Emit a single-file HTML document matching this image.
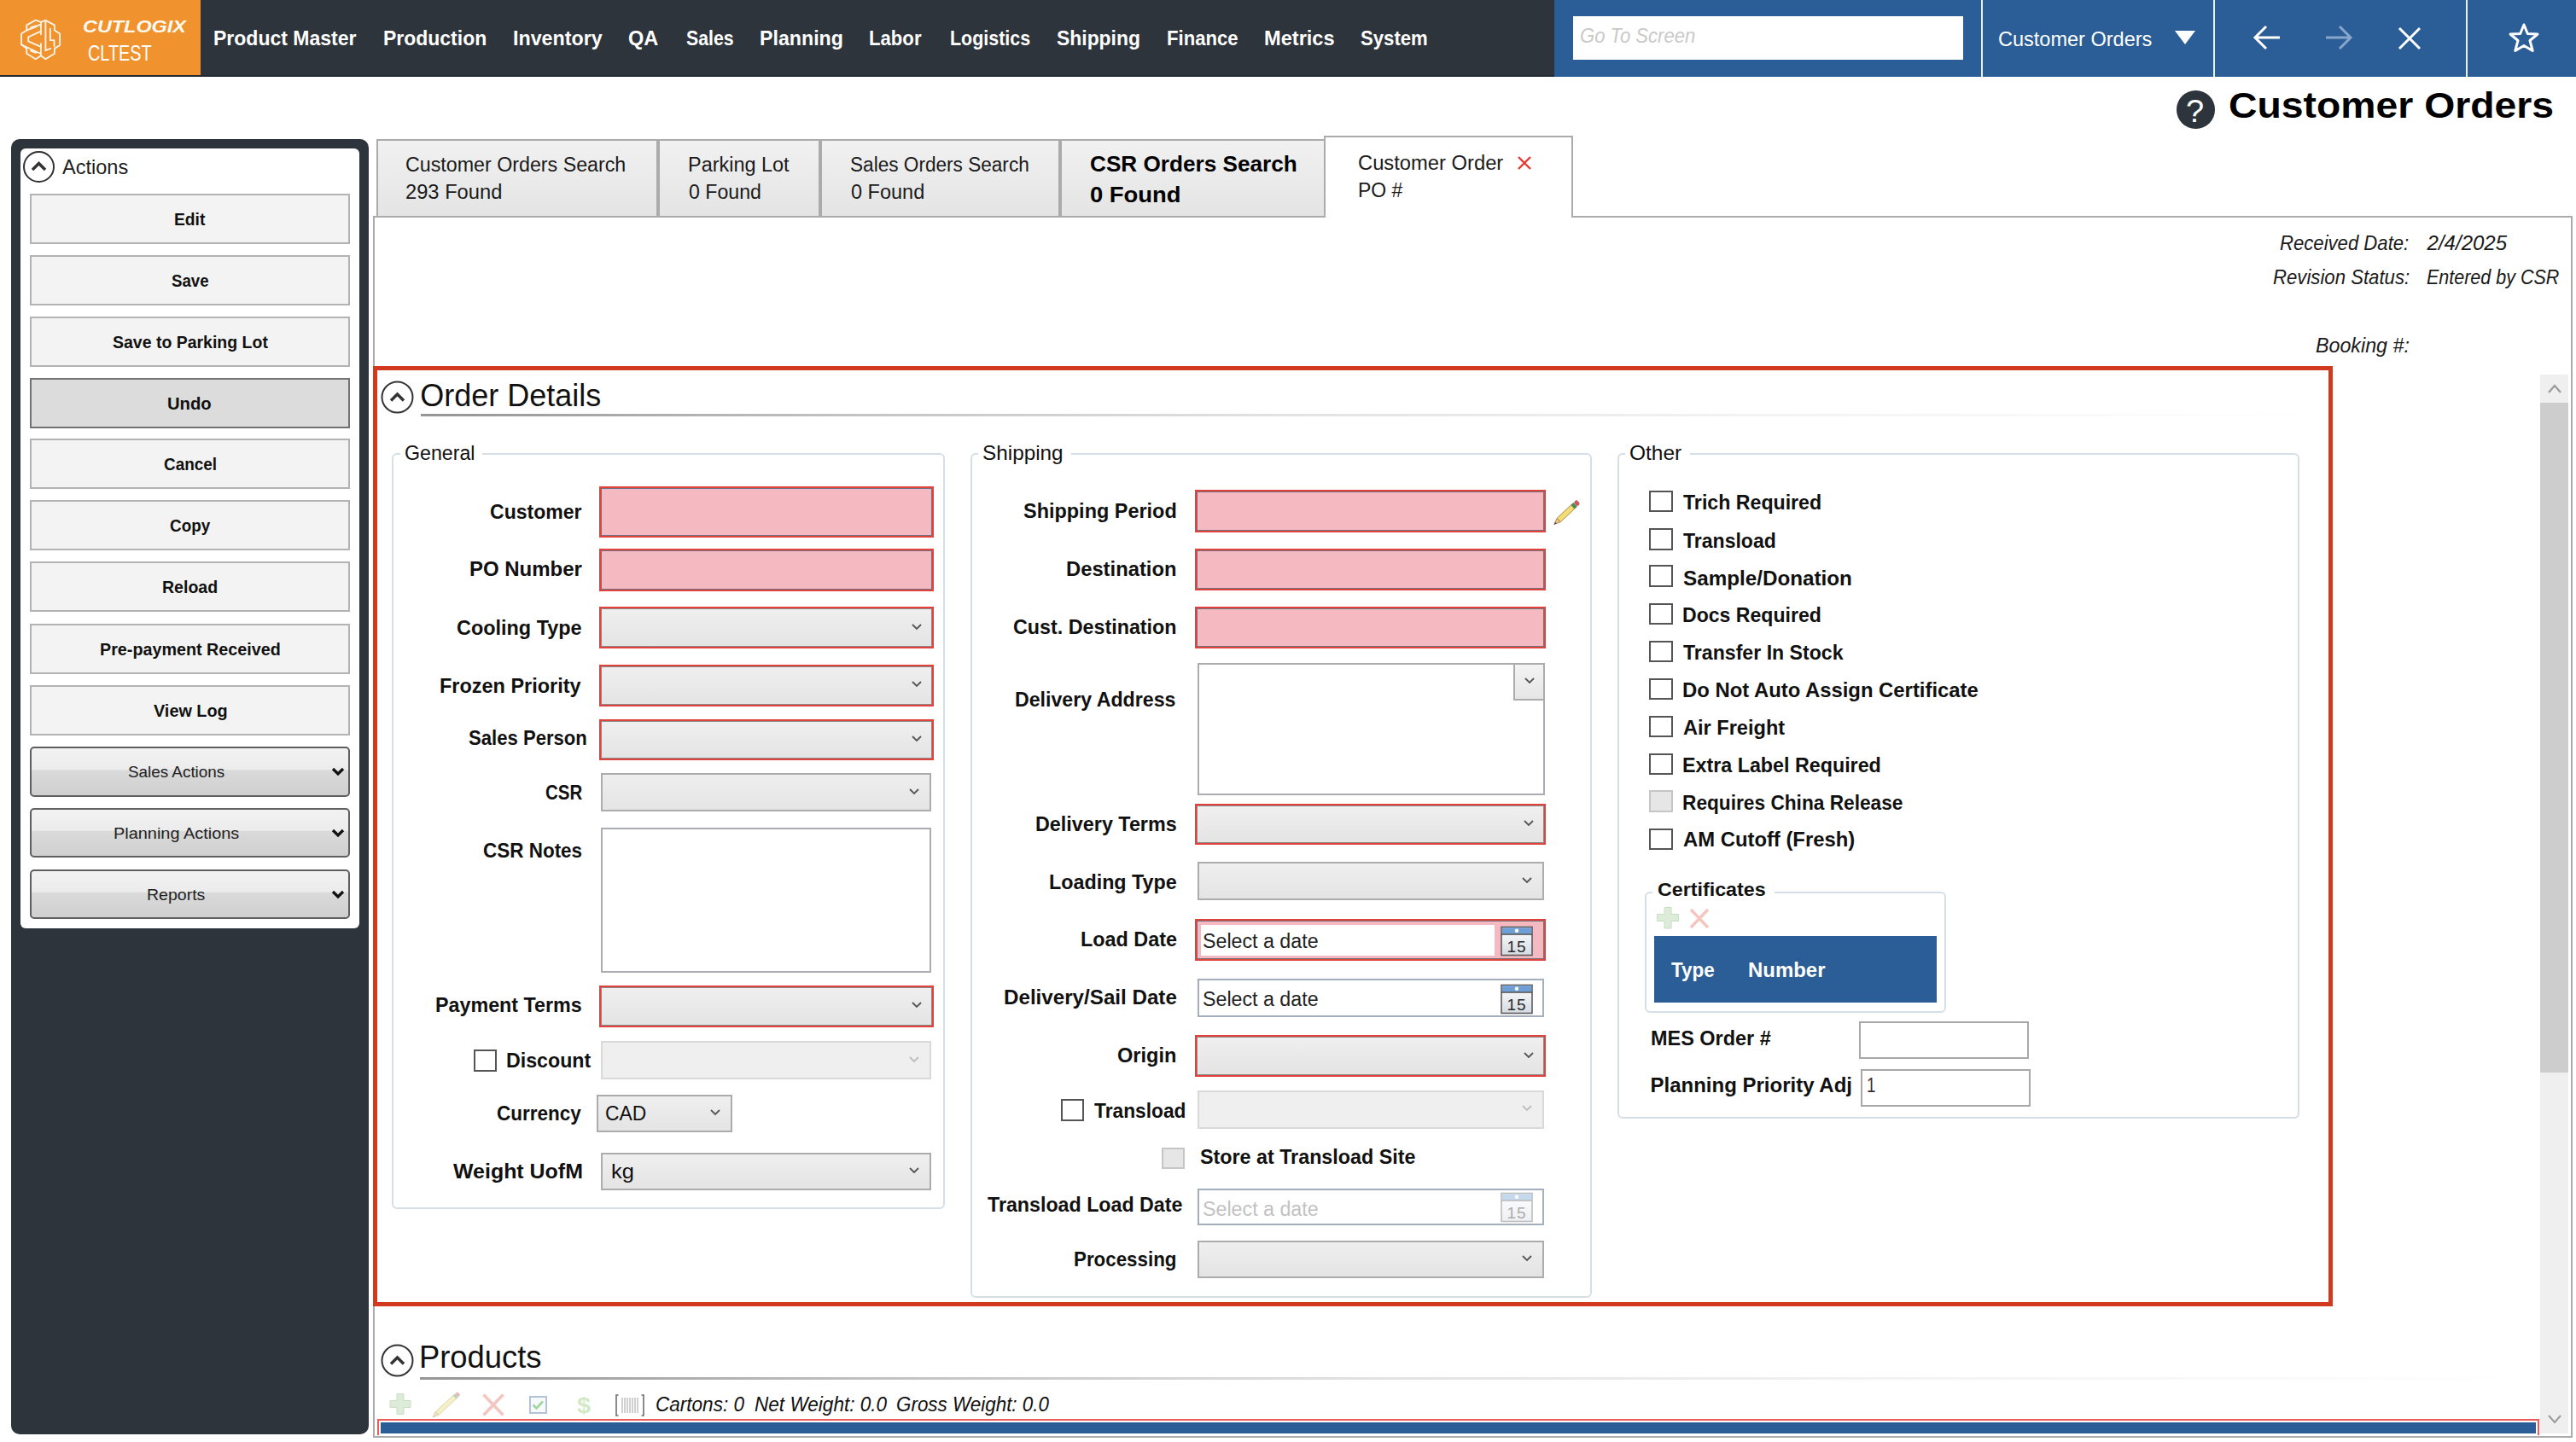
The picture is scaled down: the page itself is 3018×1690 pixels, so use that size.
<!DOCTYPE html>
<html><head><meta charset="utf-8"><style>
html,body{margin:0;padding:0;}
body{width:3018px;height:1690px;overflow:hidden;background:#fff;position:relative;font-family:"Liberation Sans", sans-serif;}
body div, body svg{position:absolute;box-sizing:border-box;}
</style></head><body>
<div style="left:0.0px;top:0.0px;width:3018.0px;height:90.0px;background:#2e343b;"></div>
<div style="left:0.0px;top:88.0px;width:1821.0px;height:2.0px;background:#232a32;"></div>
<div style="left:0.0px;top:0.0px;width:235.0px;height:88.0px;background:#f0932f;"></div>
<svg style="left:20px;top:20px" width="56" height="56" viewBox="0 0 1442 1442" fill="none" stroke="#fdf3e6" stroke-width="48" stroke-linejoin="round" stroke-linecap="round">
<path d="M720 150 L560 95 L290 240 L290 400 L130 500 L130 830 L290 950 L290 1100 L560 1270 L720 1165"/>
<path d="M720 150 L860 100 L1130 240 L1130 400 L1290 500 L1290 850 L1130 950 L1130 1100 L860 1270 L720 1165"/>
<path d="M720 150 L720 520 M720 800 L720 1165"/>
<path d="M290 400 L700 230 M720 430 L340 600 L340 730 L720 900 M130 830 L700 1100"/>
<path d="M860 130 L860 1010 L1010 950 M1000 350 L1000 700 L1120 700 L1120 880"/>
<path d="M430 330 L560 280 M430 1010 L560 1060" stroke-width="80"/>
</svg>
<div style="left:96.89px;top:19.72px;font-size:21px;line-height:21px;color:#fffaf2;white-space:nowrap;font-weight:700;font-style:italic;transform:scaleX(1.1143);transform-origin:0 0;">CUTLOGIX</div>
<div style="left:103.24px;top:48.99px;font-size:26px;line-height:26px;color:#fff;white-space:nowrap;transform:scaleX(0.7639);transform-origin:0 0;">CLTEST</div>
<div style="left:250.06px;top:33.47px;font-size:24.6px;line-height:24.6px;color:#fff;white-space:nowrap;font-weight:700;transform:scaleX(0.9358);transform-origin:0 0;">Product Master</div>
<div style="left:448.77px;top:33.47px;font-size:24.6px;line-height:24.6px;color:#fff;white-space:nowrap;font-weight:700;transform:scaleX(0.9337);transform-origin:0 0;">Production</div>
<div style="left:601.05px;top:33.47px;font-size:24.6px;line-height:24.6px;color:#fff;white-space:nowrap;font-weight:700;transform:scaleX(0.9453);transform-origin:0 0;">Inventory</div>
<div style="left:736.44px;top:33.47px;font-size:24.6px;line-height:24.6px;color:#fff;white-space:nowrap;font-weight:700;transform:scaleX(0.9577);transform-origin:0 0;">QA</div>
<div style="left:804.00px;top:33.47px;font-size:24.6px;line-height:24.6px;color:#fff;white-space:nowrap;font-weight:700;transform:scaleX(0.8649);transform-origin:0 0;">Sales</div>
<div style="left:890.06px;top:33.47px;font-size:24.6px;line-height:24.6px;color:#fff;white-space:nowrap;font-weight:700;transform:scaleX(0.9429);transform-origin:0 0;">Planning</div>
<div style="left:1018.10px;top:33.47px;font-size:24.6px;line-height:24.6px;color:#fff;white-space:nowrap;font-weight:700;transform:scaleX(0.9004);transform-origin:0 0;">Labor</div>
<div style="left:1112.83px;top:33.47px;font-size:24.6px;line-height:24.6px;color:#fff;white-space:nowrap;font-weight:700;transform:scaleX(0.8722);transform-origin:0 0;">Logistics</div>
<div style="left:1238.00px;top:33.47px;font-size:24.6px;line-height:24.6px;color:#fff;white-space:nowrap;font-weight:700;transform:scaleX(0.9313);transform-origin:0 0;">Shipping</div>
<div style="left:1367.10px;top:33.47px;font-size:24.6px;line-height:24.6px;color:#fff;white-space:nowrap;font-weight:700;transform:scaleX(0.8986);transform-origin:0 0;">Finance</div>
<div style="left:1481.04px;top:33.47px;font-size:24.6px;line-height:24.6px;color:#fff;white-space:nowrap;font-weight:700;transform:scaleX(0.9593);transform-origin:0 0;">Metrics</div>
<div style="left:1594.00px;top:33.47px;font-size:24.6px;line-height:24.6px;color:#fff;white-space:nowrap;font-weight:700;transform:scaleX(0.9004);transform-origin:0 0;">System</div>
<div style="left:1821.0px;top:0.0px;width:1197.0px;height:90.0px;background:#2b5e96;"></div>
<div style="left:1843.0px;top:19.0px;width:457.0px;height:51.0px;background:#fff;"></div>
<div style="left:1851.08px;top:29.68px;font-size:24px;line-height:24px;color:#c9c9c9;white-space:nowrap;font-style:italic;transform:scaleX(0.9187);transform-origin:0 0;">Go To Screen</div>
<div style="left:2321.0px;top:0.0px;width:2.0px;height:90.0px;background:#e8eef5;"></div>
<div style="left:2593.0px;top:0.0px;width:2.0px;height:90.0px;background:#e8eef5;"></div>
<div style="left:2889.0px;top:0.0px;width:2.0px;height:90.0px;background:#e8eef5;"></div>
<div style="left:2340.72px;top:33.68px;font-size:24px;line-height:24px;color:#fff;white-space:nowrap;transform:scaleX(0.9796);transform-origin:0 0;">Customer Orders</div>
<svg style="left:2546px;top:34px" width="28" height="20" viewBox="0 0 28 20"><path d="M2 2 L26 2 L14 18 Z" fill="#fff"/></svg>
<svg style="left:2638px;top:27px" width="36" height="34" viewBox="0 0 36 34" fill="none" stroke="#fff" stroke-width="3"><path d="M33 17 L5 17 M17 4 L4 17 L17 30"/></svg>
<svg style="left:2722px;top:27px" width="36" height="34" viewBox="0 0 36 34" fill="none" stroke="#86a6cb" stroke-width="3"><path d="M3 17 L31 17 M19 4 L32 17 L19 30"/></svg>
<svg style="left:2807px;top:29px" width="32" height="32" viewBox="0 0 32 32" fill="none" stroke="#fff" stroke-width="3"><path d="M4 4 L28 28 M28 4 L4 28"/></svg>
<svg style="left:2937px;top:24px" width="40" height="40" viewBox="0 0 40 40" fill="none" stroke="#fff" stroke-width="3" stroke-linejoin="round"><path d="M20 5 L24.3 15.5 L36 16 L27 23.5 L30.2 35.5 L20 29.5 L9.8 35.5 L13 23.5 L4 16 L15.7 15.5 Z"/></svg>
<div style="left:2550.0px;top:106.0px;width:44.5px;height:44.5px;background:#2e343b;border-radius:50%;"></div>
<div style="left:2560.94px;top:112.52px;font-size:36px;line-height:36px;color:#fff;white-space:nowrap;transform:scaleX(1.0556);transform-origin:0 0;">?</div>
<div style="left:2610.52px;top:102.29px;font-size:43px;line-height:43px;color:#000;white-space:nowrap;font-weight:700;transform:scaleX(1.0775);transform-origin:0 0;">Customer Orders</div>
<div style="left:12.5px;top:162.5px;width:419.5px;height:1518.5px;background:#2e343b;border-radius:10px;"></div>
<div style="left:24.0px;top:174.0px;width:396.5px;height:913.5px;background:#fff;border-radius:6px;"></div>
<svg style="left:26px;top:176px" width="40" height="40" viewBox="0 0 40 40" fill="none"><circle cx="19.5" cy="19.5" r="17.5" stroke="#333" stroke-width="2"/><path d="M12 23 L19.5 15.5 L27 23" stroke="#333" stroke-width="3.5"/></svg>
<div style="left:72.80px;top:184.18px;font-size:24px;line-height:24px;color:#1e1e1e;white-space:nowrap;transform:scaleX(0.9809);transform-origin:0 0;">Actions</div>
<div style="left:35.0px;top:227.0px;width:375.0px;height:59.0px;background:#f3f3f3;border:2px solid #b3b3b3;"></div>
<div style="left:35.0px;top:299.0px;width:375.0px;height:59.0px;background:#f3f3f3;border:2px solid #b3b3b3;"></div>
<div style="left:35.0px;top:371.0px;width:375.0px;height:59.0px;background:#f3f3f3;border:2px solid #b3b3b3;"></div>
<div style="left:35.0px;top:442.5px;width:375.0px;height:59.0px;background:#dcdcdc;border:2px solid #737373;"></div>
<div style="left:35.0px;top:514.0px;width:375.0px;height:59.0px;background:#f3f3f3;border:2px solid #b3b3b3;"></div>
<div style="left:35.0px;top:586.0px;width:375.0px;height:59.0px;background:#f3f3f3;border:2px solid #b3b3b3;"></div>
<div style="left:35.0px;top:658.0px;width:375.0px;height:59.0px;background:#f3f3f3;border:2px solid #b3b3b3;"></div>
<div style="left:35.0px;top:730.5px;width:375.0px;height:59.0px;background:#f3f3f3;border:2px solid #b3b3b3;"></div>
<div style="left:35.0px;top:803.0px;width:375.0px;height:59.0px;background:#f3f3f3;border:2px solid #b3b3b3;"></div>
<div style="left:204.04px;top:247.47px;font-size:20px;line-height:20px;color:#111;white-space:nowrap;font-weight:700;transform:scaleX(0.9619);transform-origin:0 0;">Edit</div>
<div style="left:201.00px;top:319.47px;font-size:20px;line-height:20px;color:#111;white-space:nowrap;font-weight:700;transform:scaleX(0.9338);transform-origin:0 0;">Save</div>
<div style="left:131.50px;top:391.47px;font-size:20px;line-height:20px;color:#111;white-space:nowrap;font-weight:700;transform:scaleX(0.9741);transform-origin:0 0;">Save to Parking Lot</div>
<div style="left:196.49px;top:462.97px;font-size:20px;line-height:20px;color:#111;white-space:nowrap;font-weight:700;transform:scaleX(1.0125);transform-origin:0 0;">Undo</div>
<div style="left:191.50px;top:534.47px;font-size:20px;line-height:20px;color:#111;white-space:nowrap;font-weight:700;transform:scaleX(0.9457);transform-origin:0 0;">Cancel</div>
<div style="left:198.50px;top:606.47px;font-size:20px;line-height:20px;color:#111;white-space:nowrap;font-weight:700;transform:scaleX(0.9435);transform-origin:0 0;">Copy</div>
<div style="left:190.02px;top:678.47px;font-size:20px;line-height:20px;color:#111;white-space:nowrap;font-weight:700;transform:scaleX(0.9773);transform-origin:0 0;">Reload</div>
<div style="left:116.51px;top:750.97px;font-size:20px;line-height:20px;color:#111;white-space:nowrap;font-weight:700;transform:scaleX(0.9867);transform-origin:0 0;">Pre-payment Received</div>
<div style="left:179.50px;top:823.47px;font-size:20px;line-height:20px;color:#111;white-space:nowrap;font-weight:700;transform:scaleX(0.9918);transform-origin:0 0;">View Log</div>
<div style="left:35.0px;top:875.0px;width:375.0px;height:58.5px;background:linear-gradient(#f2f2f2 0%,#ececec 45%,#dadada 47%,#cfcfcf 100%);border:2px solid #5f5f5f;border-radius:5px;"></div>
<svg style="left:388px;top:899.0px" width="16" height="11" viewBox="0 0 16 11"><path d="M2 2 L8 8 L14 2" fill="none" stroke="#111" stroke-width="3.2"/></svg>
<div style="left:35.0px;top:946.6px;width:375.0px;height:58.5px;background:linear-gradient(#f2f2f2 0%,#ececec 45%,#dadada 47%,#cfcfcf 100%);border:2px solid #5f5f5f;border-radius:5px;"></div>
<svg style="left:388px;top:970.6px" width="16" height="11" viewBox="0 0 16 11"><path d="M2 2 L8 8 L14 2" fill="none" stroke="#111" stroke-width="3.2"/></svg>
<div style="left:35.0px;top:1018.5px;width:375.0px;height:58.5px;background:linear-gradient(#f2f2f2 0%,#ececec 45%,#dadada 47%,#cfcfcf 100%);border:2px solid #5f5f5f;border-radius:5px;"></div>
<svg style="left:388px;top:1042.5px" width="16" height="11" viewBox="0 0 16 11"><path d="M2 2 L8 8 L14 2" fill="none" stroke="#111" stroke-width="3.2"/></svg>
<div style="left:150.00px;top:896.14px;font-size:18.5px;line-height:18.5px;color:#222;white-space:nowrap;transform:scaleX(1.0194);transform-origin:0 0;">Sales Actions</div>
<div style="left:132.92px;top:967.74px;font-size:18.5px;line-height:18.5px;color:#222;white-space:nowrap;transform:scaleX(1.0764);transform-origin:0 0;">Planning Actions</div>
<div style="left:172.45px;top:1039.64px;font-size:18.5px;line-height:18.5px;color:#222;white-space:nowrap;transform:scaleX(1.0547);transform-origin:0 0;">Reports</div>
<div style="left:437.0px;top:253.0px;width:2577.0px;height:1432.0px;border:2px solid #ababab;"></div>
<div style="left:441.0px;top:163.0px;width:329.5px;height:91.5px;background:linear-gradient(#f1f1f1,#e4e4e4);border:2px solid #ababab;"></div>
<div style="left:770.5px;top:163.0px;width:190.0px;height:91.5px;background:linear-gradient(#f1f1f1,#e4e4e4);border:2px solid #ababab;"></div>
<div style="left:960.5px;top:163.0px;width:281.5px;height:91.5px;background:linear-gradient(#f1f1f1,#e4e4e4);border:2px solid #ababab;"></div>
<div style="left:1242.0px;top:163.0px;width:310.5px;height:91.5px;background:linear-gradient(#f1f1f1,#e4e4e4);border:2px solid #ababab;"></div>
<div style="left:1551.0px;top:159.0px;width:292.0px;height:96.0px;background:#fff;border:2px solid #ababab;border-bottom:none;"></div>
<div style="left:475.49px;top:182.23px;font-size:23px;line-height:23px;color:#1a1a1a;white-space:nowrap;transform:scaleX(1.0104);transform-origin:0 0;">Customer Orders Search</div>
<div style="left:475.47px;top:214.23px;font-size:23px;line-height:23px;color:#1a1a1a;white-space:nowrap;transform:scaleX(1.0306);transform-origin:0 0;">293 Found</div>
<div style="left:805.78px;top:182.23px;font-size:23px;line-height:23px;color:#1a1a1a;white-space:nowrap;transform:scaleX(1.0193);transform-origin:0 0;">Parking Lot</div>
<div style="left:806.80px;top:214.23px;font-size:23px;line-height:23px;color:#1a1a1a;white-space:nowrap;transform:scaleX(1.0071);transform-origin:0 0;">0 Found</div>
<div style="left:996.02px;top:182.23px;font-size:23px;line-height:23px;color:#1a1a1a;white-space:nowrap;transform:scaleX(0.9826);transform-origin:0 0;">Sales Orders Search</div>
<div style="left:997.00px;top:214.23px;font-size:23px;line-height:23px;color:#1a1a1a;white-space:nowrap;transform:scaleX(1.0215);transform-origin:0 0;">0 Found</div>
<div style="left:1276.69px;top:178.59px;font-size:26px;line-height:26px;color:#000;white-space:nowrap;font-weight:700;transform:scaleX(1.0057);transform-origin:0 0;">CSR Orders Search</div>
<div style="left:1276.65px;top:215.49px;font-size:26px;line-height:26px;color:#000;white-space:nowrap;font-weight:700;transform:scaleX(1.0543);transform-origin:0 0;">0 Found</div>
<div style="left:1590.97px;top:180.33px;font-size:23px;line-height:23px;color:#1a1a1a;white-space:nowrap;transform:scaleX(1.0328);transform-origin:0 0;">Customer Order</div>
<div style="left:1591.00px;top:212.13px;font-size:23px;line-height:23px;color:#1a1a1a;white-space:nowrap;">PO #</div>
<svg style="left:1776px;top:181px" width="20" height="20" viewBox="0 0 20 20"><path d="M3 3 L17 17 M17 3 L3 17" stroke="#e8372f" stroke-width="2.4"/></svg>
<div style="left:2671.40px;top:273.18px;font-size:24px;line-height:24px;color:#1a1a1a;white-space:nowrap;font-style:italic;transform:scaleX(0.9216);transform-origin:0 0;">Received Date:</div>
<div style="left:2843.60px;top:273.18px;font-size:24px;line-height:24px;color:#1a1a1a;white-space:nowrap;font-style:italic;">2/4/2025</div>
<div style="left:2662.50px;top:313.48px;font-size:24px;line-height:24px;color:#1a1a1a;white-space:nowrap;font-style:italic;transform:scaleX(0.9233);transform-origin:0 0;">Revision Status:</div>
<div style="left:2843.00px;top:313.48px;font-size:24px;line-height:24px;color:#1a1a1a;white-space:nowrap;font-style:italic;transform:scaleX(0.8955);transform-origin:0 0;">Entered by CSR</div>
<div style="left:2712.80px;top:393.28px;font-size:24px;line-height:24px;color:#1a1a1a;white-space:nowrap;font-style:italic;transform:scaleX(0.9685);transform-origin:0 0;">Booking #:</div>
<div style="left:2976.0px;top:438.5px;width:33.0px;height:1241.5px;background:#efefef;"></div>
<div style="left:2976.0px;top:472.0px;width:33.0px;height:785.0px;background:#cdcdcd;"></div>
<svg style="left:2983px;top:448px" width="20" height="14" viewBox="0 0 20 14"><path d="M3 12 L10 4 L17 12" fill="none" stroke="#9a9a9a" stroke-width="2.2"/></svg>
<svg style="left:2983px;top:1656px" width="20" height="14" viewBox="0 0 20 14"><path d="M3 3 L10 11 L17 3" fill="none" stroke="#9a9a9a" stroke-width="2"/></svg>
<div style="left:437.0px;top:429.0px;width:2296.0px;height:1102.0px;border:5px solid #d13a1f;"></div>
<svg style="left:445.5px;top:445.5px" width="40" height="40" viewBox="0 0 40 40" fill="none"><circle cx="19.5" cy="19.5" r="18" stroke="#333" stroke-width="2"/><path d="M12 23.5 L19.5 16 L27 23.5" stroke="#333" stroke-width="3.5"/></svg>
<div style="left:492.20px;top:445.52px;font-size:36px;line-height:36px;color:#111;white-space:nowrap;">Order Details</div>
<div style="left:492.5px;top:485.0px;width:2235.5px;height:3.0px;background:linear-gradient(90deg,#959595 0%,#c2c2c2 22%,#e2e2e2 45%,#f3f3f3 70%,rgba(255,255,255,0) 100%);"></div>
<div style="left:459.0px;top:531.0px;width:648.0px;height:886.0px;border:2px solid #d6dfe5;border-radius:6px;"></div>
<div style="left:468.8px;top:529.0px;width:96.2px;height:5.0px;background:#fff;"></div>
<div style="left:473.85px;top:519.26px;font-size:24.5px;line-height:24.5px;color:#111;white-space:nowrap;transform:scaleX(0.9467);transform-origin:0 0;">General</div>
<div style="left:574.30px;top:587.98px;font-size:24px;line-height:24px;color:#111;white-space:nowrap;font-weight:700;transform:scaleX(0.9599);transform-origin:0 0;">Customer</div>
<div style="left:549.90px;top:654.68px;font-size:24px;line-height:24px;color:#111;white-space:nowrap;font-weight:700;">PO Number</div>
<div style="left:535.30px;top:723.68px;font-size:24px;line-height:24px;color:#111;white-space:nowrap;font-weight:700;transform:scaleX(0.9756);transform-origin:0 0;">Cooling Type</div>
<div style="left:515.32px;top:791.68px;font-size:24px;line-height:24px;color:#111;white-space:nowrap;font-weight:700;transform:scaleX(0.9774);transform-origin:0 0;">Frozen Priority</div>
<div style="left:548.80px;top:853.38px;font-size:24px;line-height:24px;color:#111;white-space:nowrap;font-weight:700;transform:scaleX(0.9208);transform-origin:0 0;">Sales Person</div>
<div style="left:638.60px;top:917.08px;font-size:24px;line-height:24px;color:#111;white-space:nowrap;font-weight:700;transform:scaleX(0.8522);transform-origin:0 0;">CSR</div>
<div style="left:565.70px;top:984.68px;font-size:24px;line-height:24px;color:#111;white-space:nowrap;font-weight:700;transform:scaleX(0.9363);transform-origin:0 0;">CSR Notes</div>
<div style="left:510.13px;top:1166.18px;font-size:24px;line-height:24px;color:#111;white-space:nowrap;font-weight:700;transform:scaleX(0.9703);transform-origin:0 0;">Payment Terms</div>
<div style="left:592.63px;top:1230.68px;font-size:24px;line-height:24px;color:#111;white-space:nowrap;font-weight:700;transform:scaleX(0.9668);transform-origin:0 0;">Discount</div>
<div style="left:582.10px;top:1292.68px;font-size:24px;line-height:24px;color:#111;white-space:nowrap;font-weight:700;transform:scaleX(0.9375);transform-origin:0 0;">Currency</div>
<div style="left:530.60px;top:1360.68px;font-size:24px;line-height:24px;color:#111;white-space:nowrap;font-weight:700;transform:scaleX(1.0393);transform-origin:0 0;">Weight UofM</div>
<div style="left:702.3px;top:570.3px;width:391.4px;height:59.3px;background:#f4b9c1;border:2.5px solid #e2413c;box-shadow:inset 0 0 0 1px #6d7680;"></div>
<div style="left:702.3px;top:643.2px;width:391.4px;height:49.4px;background:#f4b9c1;border:2.5px solid #e2413c;box-shadow:inset 0 0 0 1px #6d7680;"></div>
<div style="left:702.3px;top:710.8px;width:391.4px;height:49.4px;background:linear-gradient(#efefef,#e4e4e4);border:2.5px solid #e2413c;box-shadow:inset 0 0 0 1px #8a8a8a;"></div>
<svg style="left:1066.7px;top:729.5px" width="14" height="10" viewBox="0 0 14 10"><path d="M2 2 L7 7 L12 2" fill="none" stroke="#555" stroke-width="1.8"/></svg>
<div style="left:702.3px;top:778.7px;width:391.4px;height:49.4px;background:linear-gradient(#efefef,#e4e4e4);border:2.5px solid #e2413c;box-shadow:inset 0 0 0 1px #8a8a8a;"></div>
<svg style="left:1066.7px;top:797.4px" width="14" height="10" viewBox="0 0 14 10"><path d="M2 2 L7 7 L12 2" fill="none" stroke="#555" stroke-width="1.8"/></svg>
<div style="left:702.3px;top:842.7px;width:391.4px;height:48.6px;background:linear-gradient(#efefef,#e4e4e4);border:2.5px solid #e2413c;box-shadow:inset 0 0 0 1px #8a8a8a;"></div>
<svg style="left:1066.7px;top:861.0px" width="14" height="10" viewBox="0 0 14 10"><path d="M2 2 L7 7 L12 2" fill="none" stroke="#555" stroke-width="1.8"/></svg>
<div style="left:704.4px;top:906.2px;width:386.6px;height:45.0px;background:linear-gradient(#efefef,#e4e4e4);border:2px solid #acacac;"></div>
<svg style="left:1064.0px;top:922.7px" width="14" height="10" viewBox="0 0 14 10"><path d="M2 2 L7 7 L12 2" fill="none" stroke="#555" stroke-width="1.8"/></svg>
<div style="left:704.4px;top:970.0px;width:386.6px;height:169.5px;background:#fff;border:2px solid #abadb3;"></div>
<div style="left:702.3px;top:1154.7px;width:391.4px;height:49.4px;background:linear-gradient(#efefef,#e4e4e4);border:2.5px solid #e2413c;box-shadow:inset 0 0 0 1px #8a8a8a;"></div>
<svg style="left:1066.7px;top:1173.4px" width="14" height="10" viewBox="0 0 14 10"><path d="M2 2 L7 7 L12 2" fill="none" stroke="#555" stroke-width="1.8"/></svg>
<div style="left:704.4px;top:1220.3px;width:386.6px;height:44.7px;background:#efefef;border:2px solid #d9d9d9;"></div>
<svg style="left:1064.0px;top:1236.7px" width="14" height="10" viewBox="0 0 14 10"><path d="M2 2 L7 7 L12 2" fill="none" stroke="#bdbdbd" stroke-width="1.8"/></svg>
<div style="left:554.6px;top:1230.0px;width:27.4px;height:26.0px;background:#fff;border:2px solid #555;"></div>
<div style="left:699.0px;top:1282.5px;width:159.0px;height:44.2px;background:linear-gradient(#efefef,#e4e4e4);border:2px solid #acacac;"></div>
<svg style="left:831.0px;top:1298.6px" width="14" height="10" viewBox="0 0 14 10"><path d="M2 2 L7 7 L12 2" fill="none" stroke="#555" stroke-width="1.8"/></svg>
<div style="left:709.05px;top:1293.38px;font-size:24px;line-height:24px;color:#111;white-space:nowrap;transform:scaleX(0.9526);transform-origin:0 0;">CAD</div>
<div style="left:704.4px;top:1350.6px;width:386.6px;height:44.2px;background:linear-gradient(#efefef,#e4e4e4);border:2px solid #acacac;"></div>
<svg style="left:1064.0px;top:1366.7px" width="14" height="10" viewBox="0 0 14 10"><path d="M2 2 L7 7 L12 2" fill="none" stroke="#555" stroke-width="1.8"/></svg>
<div style="left:715.54px;top:1360.68px;font-size:24px;line-height:24px;color:#111;white-space:nowrap;transform:scaleX(1.0609);transform-origin:0 0;">kg</div>
<div style="left:1137.0px;top:531.0px;width:728.0px;height:990.0px;border:2px solid #d6dfe5;border-radius:6px;"></div>
<div style="left:1146.0px;top:529.0px;width:109.0px;height:5.0px;background:#fff;"></div>
<div style="left:1151.01px;top:518.76px;font-size:24.5px;line-height:24.5px;color:#111;white-space:nowrap;transform:scaleX(0.9922);transform-origin:0 0;">Shipping</div>
<div style="left:1199.10px;top:587.08px;font-size:24px;line-height:24px;color:#111;white-space:nowrap;font-weight:700;transform:scaleX(0.9769);transform-origin:0 0;">Shipping Period</div>
<div style="left:1249.41px;top:655.48px;font-size:24px;line-height:24px;color:#111;white-space:nowrap;font-weight:700;transform:scaleX(0.9906);transform-origin:0 0;">Destination</div>
<div style="left:1187.30px;top:723.38px;font-size:24px;line-height:24px;color:#111;white-space:nowrap;font-weight:700;transform:scaleX(0.9706);transform-origin:0 0;">Cust. Destination</div>
<div style="left:1189.23px;top:807.58px;font-size:24px;line-height:24px;color:#111;white-space:nowrap;font-weight:700;transform:scaleX(0.9653);transform-origin:0 0;">Delivery Address</div>
<div style="left:1212.83px;top:953.68px;font-size:24px;line-height:24px;color:#111;white-space:nowrap;font-weight:700;transform:scaleX(0.9729);transform-origin:0 0;">Delivery Terms</div>
<div style="left:1228.83px;top:1022.48px;font-size:24px;line-height:24px;color:#111;white-space:nowrap;font-weight:700;transform:scaleX(0.9708);transform-origin:0 0;">Loading Type</div>
<div style="left:1265.63px;top:1089.48px;font-size:24px;line-height:24px;color:#111;white-space:nowrap;font-weight:700;transform:scaleX(0.9732);transform-origin:0 0;">Load Date</div>
<div style="left:1175.69px;top:1157.28px;font-size:24px;line-height:24px;color:#111;white-space:nowrap;font-weight:700;transform:scaleX(1.0070);transform-origin:0 0;">Delivery/Sail Date</div>
<div style="left:1309.40px;top:1225.18px;font-size:24px;line-height:24px;color:#111;white-space:nowrap;font-weight:700;transform:scaleX(0.9828);transform-origin:0 0;">Origin</div>
<div style="left:1258.37px;top:1463.98px;font-size:24px;line-height:24px;color:#111;white-space:nowrap;font-weight:700;transform:scaleX(0.9309);transform-origin:0 0;">Processing</div>
<div style="left:1281.70px;top:1289.88px;font-size:24px;line-height:24px;color:#111;white-space:nowrap;font-weight:700;transform:scaleX(0.9476);transform-origin:0 0;">Transload</div>
<div style="left:1405.60px;top:1344.38px;font-size:24px;line-height:24px;color:#111;white-space:nowrap;font-weight:700;transform:scaleX(0.9703);transform-origin:0 0;">Store at Transload Site</div>
<div style="left:1156.90px;top:1400.48px;font-size:24px;line-height:24px;color:#111;white-space:nowrap;font-weight:700;transform:scaleX(0.9677);transform-origin:0 0;">Transload Load Date</div>
<div style="left:1399.7px;top:574.3px;width:411.7px;height:50.2px;background:#f4b9c1;border:2.5px solid #e2413c;box-shadow:inset 0 0 0 1px #6d7680;"></div>
<div style="left:1399.7px;top:642.8px;width:411.7px;height:49.6px;background:#f4b9c1;border:2.5px solid #e2413c;box-shadow:inset 0 0 0 1px #6d7680;"></div>
<div style="left:1399.7px;top:710.6px;width:411.7px;height:49.6px;background:#f4b9c1;border:2.5px solid #e2413c;box-shadow:inset 0 0 0 1px #6d7680;"></div>
<svg style="left:1812px;top:578px" width="48" height="44" viewBox="0 0 48 44"><g transform="translate(8.8,36.6) rotate(-43.2)"><polygon points="0,0 7.5,-3 7.5,3" fill="#f0c48a" stroke="#9a7a40" stroke-width="0.8"/><polygon points="0,0 2.8,-1.2 2.8,1.2" fill="#444"/><rect x="7.5" y="-3" width="22.5" height="6" fill="#f3dd78" stroke="#a88636" stroke-width="0.9"/><rect x="30" y="-3.3" width="4" height="6.6" fill="#4e8a50"/><rect x="34" y="-3.2" width="5" height="6.4" rx="2.2" fill="#c65a5a"/></g></svg>
<div style="left:1402.7px;top:777.0px;width:407.8px;height:154.5px;background:#fff;border:2px solid #abadb3;"></div>
<div style="left:1772.7px;top:777.0px;width:37.8px;height:44.4px;background:linear-gradient(#f3f3f3,#e6e6e6);border:2px solid #acacac;"></div>
<svg style="left:1784.5px;top:793.0px" width="14" height="10" viewBox="0 0 14 10"><path d="M2 2 L7 7 L12 2" fill="none" stroke="#555" stroke-width="1.8"/></svg>
<div style="left:1399.7px;top:941.5px;width:411.7px;height:48.7px;background:linear-gradient(#efefef,#e4e4e4);border:2.5px solid #e2413c;box-shadow:inset 0 0 0 1px #8a8a8a;"></div>
<svg style="left:1784.4px;top:959.9px" width="14" height="10" viewBox="0 0 14 10"><path d="M2 2 L7 7 L12 2" fill="none" stroke="#555" stroke-width="1.8"/></svg>
<div style="left:1402.7px;top:1010.3px;width:406.3px;height:45.2px;background:linear-gradient(#efefef,#e4e4e4);border:2px solid #acacac;"></div>
<svg style="left:1782.0px;top:1026.9px" width="14" height="10" viewBox="0 0 14 10"><path d="M2 2 L7 7 L12 2" fill="none" stroke="#555" stroke-width="1.8"/></svg>
<div style="left:1399.7px;top:1077.3px;width:411.7px;height:49.0px;background:#f4b9c1;border:2.5px solid #e2413c;box-shadow:inset 0 0 0 1px #6d7680;"></div>
<div style="left:1406.8px;top:1084.0px;width:344.7px;height:35.5px;background:#fff;"></div>
<svg style="left:1757px;top:1084.5px;opacity:1" width="40" height="37" viewBox="0 0 40 37">
<defs><linearGradient id="cg" x1="0" y1="0" x2="0" y2="1"><stop offset="0" stop-color="#ffffff"/><stop offset="1" stop-color="#d5dbe2"/></linearGradient></defs>
<rect x="2" y="1.5" width="36" height="33" fill="url(#cg)" stroke="#5c5c5c" stroke-width="1.6"/>
<rect x="2.8" y="2.3" width="34.4" height="7.2" fill="#6e9fd7"/>
<path d="M2 10 H38" stroke="#4a4a4a" stroke-width="1.4"/>
<circle cx="20" cy="5.8" r="2.2" fill="#fff"/>
<text x="20" y="30.5" font-family="Liberation Sans" font-size="19" letter-spacing="1" text-anchor="middle" fill="#2a2a2a">15</text></svg>
<div style="left:1408.81px;top:1092.20px;font-size:23.5px;line-height:23.5px;color:#222;white-space:nowrap;transform:scaleX(0.9882);transform-origin:0 0;">Select a date</div>
<div style="left:1402.7px;top:1146.6px;width:406.3px;height:45.8px;background:#fff;border:2px solid #a3afbd;"></div>
<svg style="left:1757px;top:1153px;opacity:1" width="40" height="37" viewBox="0 0 40 37">
<defs><linearGradient id="cg" x1="0" y1="0" x2="0" y2="1"><stop offset="0" stop-color="#ffffff"/><stop offset="1" stop-color="#d5dbe2"/></linearGradient></defs>
<rect x="2" y="1.5" width="36" height="33" fill="url(#cg)" stroke="#5c5c5c" stroke-width="1.6"/>
<rect x="2.8" y="2.3" width="34.4" height="7.2" fill="#6e9fd7"/>
<path d="M2 10 H38" stroke="#4a4a4a" stroke-width="1.4"/>
<circle cx="20" cy="5.8" r="2.2" fill="#fff"/>
<text x="20" y="30.5" font-family="Liberation Sans" font-size="19" letter-spacing="1" text-anchor="middle" fill="#2a2a2a">15</text></svg>
<div style="left:1408.81px;top:1160.10px;font-size:23.5px;line-height:23.5px;color:#222;white-space:nowrap;transform:scaleX(0.9882);transform-origin:0 0;">Select a date</div>
<div style="left:1399.7px;top:1213.0px;width:411.7px;height:49.0px;background:linear-gradient(#efefef,#e4e4e4);border:2.5px solid #e2413c;box-shadow:inset 0 0 0 1px #8a8a8a;"></div>
<svg style="left:1784.4px;top:1231.5px" width="14" height="10" viewBox="0 0 14 10"><path d="M2 2 L7 7 L12 2" fill="none" stroke="#555" stroke-width="1.8"/></svg>
<div style="left:1242.5px;top:1288.0px;width:27.5px;height:26.0px;background:#fff;border:2px solid #555;"></div>
<div style="left:1402.7px;top:1278.3px;width:406.3px;height:44.3px;background:#efefef;border:2px solid #d9d9d9;"></div>
<svg style="left:1782.0px;top:1294.4px" width="14" height="10" viewBox="0 0 14 10"><path d="M2 2 L7 7 L12 2" fill="none" stroke="#bdbdbd" stroke-width="1.8"/></svg>
<div style="left:1360.5px;top:1345.0px;width:27.5px;height:25.0px;background:#e6e6e6;border:2px solid #c6c6c6;"></div>
<div style="left:1402.7px;top:1392.8px;width:406.3px;height:43.7px;background:#fff;border:2px solid #a3afbd;"></div>
<svg style="left:1757px;top:1397px;opacity:0.4" width="40" height="37" viewBox="0 0 40 37">
<defs><linearGradient id="cg" x1="0" y1="0" x2="0" y2="1"><stop offset="0" stop-color="#ffffff"/><stop offset="1" stop-color="#d5dbe2"/></linearGradient></defs>
<rect x="2" y="1.5" width="36" height="33" fill="url(#cg)" stroke="#5c5c5c" stroke-width="1.6"/>
<rect x="2.8" y="2.3" width="34.4" height="7.2" fill="#6e9fd7"/>
<path d="M2 10 H38" stroke="#4a4a4a" stroke-width="1.4"/>
<circle cx="20" cy="5.8" r="2.2" fill="#fff"/>
<text x="20" y="30.5" font-family="Liberation Sans" font-size="19" letter-spacing="1" text-anchor="middle" fill="#2a2a2a">15</text></svg>
<div style="left:1408.81px;top:1405.50px;font-size:23.5px;line-height:23.5px;color:#c2c2c2;white-space:nowrap;transform:scaleX(0.9889);transform-origin:0 0;">Select a date</div>
<div style="left:1402.7px;top:1454.2px;width:406.3px;height:44.2px;background:linear-gradient(#efefef,#e4e4e4);border:2px solid #acacac;"></div>
<svg style="left:1782.0px;top:1470.3px" width="14" height="10" viewBox="0 0 14 10"><path d="M2 2 L7 7 L12 2" fill="none" stroke="#555" stroke-width="1.8"/></svg>
<div style="left:1894.5px;top:530.5px;width:799.9px;height:780.5px;border:2px solid #d6dfe5;border-radius:6px;"></div>
<div style="left:1904.0px;top:528.5px;width:76.0px;height:5.0px;background:#fff;"></div>
<div style="left:1909.00px;top:519.26px;font-size:24.5px;line-height:24.5px;color:#111;white-space:nowrap;">Other</div>
<div style="left:1932.0px;top:574.6px;width:27.5px;height:25.5px;background:#fff;border:2px solid #555;"></div>
<div style="left:1971.80px;top:577.48px;font-size:24px;line-height:24px;color:#111;white-space:nowrap;font-weight:700;transform:scaleX(0.9649);transform-origin:0 0;">Trich Required</div>
<div style="left:1932.0px;top:619.0px;width:27.5px;height:25.5px;background:#fff;border:2px solid #555;"></div>
<div style="left:1971.80px;top:621.88px;font-size:24px;line-height:24px;color:#111;white-space:nowrap;font-weight:700;transform:scaleX(0.9600);transform-origin:0 0;">Transload</div>
<div style="left:1932.0px;top:662.4px;width:27.5px;height:25.5px;background:#fff;border:2px solid #555;"></div>
<div style="left:1971.80px;top:665.68px;font-size:24px;line-height:24px;color:#111;white-space:nowrap;font-weight:700;transform:scaleX(1.0094);transform-origin:0 0;">Sample/Donation</div>
<div style="left:1932.0px;top:706.8px;width:27.5px;height:25.5px;background:#fff;border:2px solid #555;"></div>
<div style="left:1970.84px;top:709.28px;font-size:24px;line-height:24px;color:#111;white-space:nowrap;font-weight:700;transform:scaleX(0.9612);transform-origin:0 0;">Docs Required</div>
<div style="left:1932.0px;top:750.6px;width:27.5px;height:25.5px;background:#fff;border:2px solid #555;"></div>
<div style="left:1971.80px;top:753.08px;font-size:24px;line-height:24px;color:#111;white-space:nowrap;font-weight:700;transform:scaleX(0.9632);transform-origin:0 0;">Transfer In Stock</div>
<div style="left:1932.0px;top:794.5px;width:27.5px;height:25.5px;background:#fff;border:2px solid #555;"></div>
<div style="left:1970.81px;top:796.98px;font-size:24px;line-height:24px;color:#111;white-space:nowrap;font-weight:700;transform:scaleX(0.9939);transform-origin:0 0;">Do Not Auto Assign Certificate</div>
<div style="left:1932.0px;top:838.5px;width:27.5px;height:25.5px;background:#fff;border:2px solid #555;"></div>
<div style="left:1971.80px;top:841.48px;font-size:24px;line-height:24px;color:#111;white-space:nowrap;font-weight:700;transform:scaleX(0.9823);transform-origin:0 0;">Air Freight</div>
<div style="left:1932.0px;top:882.5px;width:27.5px;height:25.5px;background:#fff;border:2px solid #555;"></div>
<div style="left:1970.83px;top:885.28px;font-size:24px;line-height:24px;color:#111;white-space:nowrap;font-weight:700;transform:scaleX(0.9698);transform-origin:0 0;">Extra Label Required</div>
<div style="left:1932.0px;top:926.3px;width:27.5px;height:25.5px;background:#e6e6e6;border:2px solid #c6c6c6;"></div>
<div style="left:1970.85px;top:929.28px;font-size:24px;line-height:24px;color:#111;white-space:nowrap;font-weight:700;transform:scaleX(0.9452);transform-origin:0 0;">Requires China Release</div>
<div style="left:1932.0px;top:970.8px;width:27.5px;height:25.5px;background:#fff;border:2px solid #555;"></div>
<div style="left:1971.80px;top:971.68px;font-size:24px;line-height:24px;color:#111;white-space:nowrap;font-weight:700;transform:scaleX(0.9929);transform-origin:0 0;">AM Cutoff (Fresh)</div>
<div style="left:1927.0px;top:1045.0px;width:353.4px;height:141.5px;border:2px solid #d6dfe5;border-radius:6px;"></div>
<div style="left:1936.0px;top:1043.0px;width:142.7px;height:5.0px;background:#fff;"></div>
<div style="left:1942.00px;top:1032.80px;font-size:21.5px;line-height:21.5px;color:#111;white-space:nowrap;font-weight:700;transform:scaleX(1.0815);transform-origin:0 0;">Certificates</div>
<svg style="left:1940px;top:1062px" width="29" height="29" viewBox="0 0 29 29"><path d="M10 1.5 H18 V9.5 H26.5 V17.5 H18 V26 H10 V17.5 H1.5 V9.5 H10 Z" fill="#dcecd8" stroke="#c9dcc4" stroke-width="1"/></svg>
<svg style="left:1978px;top:1063px" width="26" height="27" viewBox="0 0 26 27"><path d="M3 3 L23 24 M23 3 L3 24" stroke="#f5c6c0" stroke-width="3.4"/></svg>
<div style="left:1937.7px;top:1096.7px;width:331.8px;height:78.3px;background:#2b5e96;"></div>
<div style="left:1958.00px;top:1125.83px;font-size:23px;line-height:23px;color:#fff;white-space:nowrap;font-weight:700;transform:scaleX(0.9769);transform-origin:0 0;">Type</div>
<div style="left:2048.36px;top:1125.83px;font-size:23px;line-height:23px;color:#fff;white-space:nowrap;font-weight:700;transform:scaleX(1.0413);transform-origin:0 0;">Number</div>
<div style="left:1933.52px;top:1204.68px;font-size:24px;line-height:24px;color:#111;white-space:nowrap;font-weight:700;transform:scaleX(0.9776);transform-origin:0 0;">MES Order #</div>
<div style="left:2178.0px;top:1196.7px;width:199.3px;height:44.0px;background:#fff;border:2px solid #a8a8a8;"></div>
<div style="left:1933.50px;top:1260.18px;font-size:24px;line-height:24px;color:#111;white-space:nowrap;font-weight:700;">Planning Priority Adj</div>
<div style="left:2180.0px;top:1252.6px;width:199.4px;height:44.1px;background:#fff;border:2px solid #a8a8a8;"></div>
<div style="left:2187.18px;top:1260.53px;font-size:23px;line-height:23px;color:#3a2a3a;white-space:nowrap;transform:scaleX(0.8182);transform-origin:0 0;">1</div>
<svg style="left:445.5px;top:1574.5px" width="40" height="40" viewBox="0 0 40 40" fill="none"><circle cx="19.5" cy="19.5" r="18" stroke="#333" stroke-width="2"/><path d="M12 23.5 L19.5 16 L27 23.5" stroke="#333" stroke-width="3.5"/></svg>
<div style="left:490.88px;top:1573.02px;font-size:36px;line-height:36px;color:#111;white-space:nowrap;transform:scaleX(1.0103);transform-origin:0 0;">Products</div>
<div style="left:492.0px;top:1614.0px;width:2483.0px;height:3.0px;background:linear-gradient(90deg,#959595 0%,#c2c2c2 22%,#e2e2e2 45%,#f3f3f3 70%,rgba(255,255,255,0) 100%);"></div>
<svg style="left:455px;top:1632px" width="29" height="28" viewBox="0 0 29 28"><path d="M10 1.5 H18 V9.5 H26 V17.5 H18 V25.5 H10 V17.5 H2 V9.5 H10 Z" fill="#dcecd8" stroke="#c9dcc4" stroke-width="1"/></svg>
<svg style="left:503px;top:1630px" width="38" height="34" viewBox="0 0 38 34"><g transform="translate(4,31) rotate(-42.5)"><polygon points="0,0 7,-2.6 7,2.6" fill="#f3e2c2" stroke="#cdbf9f" stroke-width="0.7"/><rect x="7" y="-2.6" width="28" height="5.2" fill="#f6f0c8" stroke="#d8cfa0" stroke-width="0.8"/><rect x="35" y="-2.8" width="3" height="5.6" fill="#b9d2bb"/><rect x="38" y="-2.6" width="3.5" height="5.2" rx="1.5" fill="#eab6b6"/></g></svg>
<svg style="left:563px;top:1632px" width="30" height="29" viewBox="0 0 30 29"><path d="M3.5 2.5 L26.5 26.5 M26.5 2.5 L3.5 26.5" stroke="#f5c6c0" stroke-width="3.6"/></svg>
<svg style="left:619px;top:1635px" width="23" height="23" viewBox="0 0 23 23"><rect x="2" y="2" width="19" height="19" fill="#f7f9fb" stroke="#b2c3d8" stroke-width="2"/><path d="M5.5 11.5 L9.5 15.5 L17 7.5" fill="none" stroke="#9fd59f" stroke-width="2.6"/></svg>
<div style="left:675.50px;top:1633.99px;font-size:26px;line-height:26px;color:#d3e9c6;white-space:nowrap;font-weight:700;transform:scaleX(1.1133);transform-origin:0 0;">$</div>
<svg style="left:720px;top:1634px" width="36" height="26" viewBox="0 0 36 26" fill="none"><path d="M4.5 1 H2 V25 H4.5 M31.5 1 H34 V25 H31.5" stroke="#6e6e6e" stroke-width="1.6"/><path d="M9 4 V22 M12 4 V22 M15 4 V22 M18 4 V22 M21 4 V22 M24 4 V22 M27 4 V22" stroke="#b8b8b8" stroke-width="1.3"/></svg>
<div style="left:768.32px;top:1634.53px;font-size:23px;line-height:23px;color:#111;white-space:nowrap;font-style:italic;transform:scaleX(0.9799);transform-origin:0 0;">Cartons: 0</div>
<div style="left:883.70px;top:1634.53px;font-size:23px;line-height:23px;color:#111;white-space:nowrap;font-style:italic;transform:scaleX(0.9810);transform-origin:0 0;">Net Weight: 0.0</div>
<div style="left:1049.83px;top:1634.53px;font-size:23px;line-height:23px;color:#111;white-space:nowrap;font-style:italic;transform:scaleX(0.9745);transform-origin:0 0;">Gross Weight: 0.0</div>
<div style="left:442.4px;top:1662.5px;width:2532.6px;height:19.5px;border:2px solid #f05a5a;border-bottom:none;"></div>
<div style="left:446.3px;top:1667.0px;width:2524.7px;height:13.0px;background:#2b5e96;"></div>
</body></html>
